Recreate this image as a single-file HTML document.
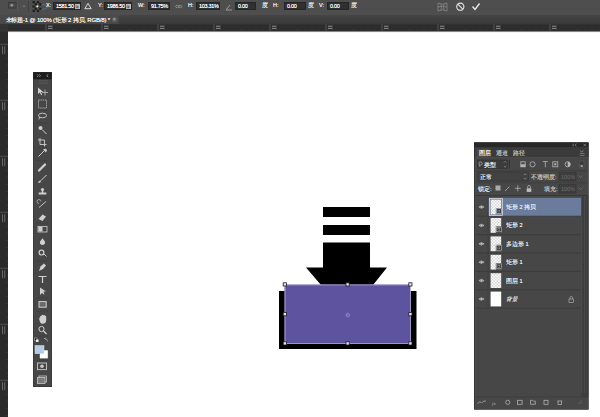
<!DOCTYPE html>
<html><head><meta charset="utf-8">
<style>
*{margin:0;padding:0;box-sizing:border-box}
html,body{width:600px;height:417px;overflow:hidden;background:#fff;font-family:"Liberation Sans",sans-serif}
.a{position:absolute}
#opt{left:0;top:0;width:600px;height:14.5px;background:#4e4e4e}
#tabs{left:0;top:14.5px;width:600px;height:9.5px;background:linear-gradient(#454545,#393939)}
#tab{left:0;top:14.5px;width:119px;height:9.5px;background:#4a4a4a;color:#f2f2f2;font-size:6px;line-height:10px;padding-left:5.5px;letter-spacing:-0.17px;text-shadow:0 0 0.4px #fff;white-space:nowrap}
#tabx{left:111.5px;top:16.5px;width:5.5px;height:5.5px;border-radius:50%;background:#5e5e5e;color:#bbb;font-size:5px;line-height:5.5px;text-align:center}
#rulerh{left:0;top:24px;width:600px;height:8px;background:#2a2a2a}
#rulerv{left:0;top:24px;width:8px;height:393px;background:#2a2a2a}
#corner{left:0;top:24px;width:8px;height:8px;background:#3a3a3a}
.box{background:#303030;border:0.5px solid #262626;color:#ffffff;font-size:5.5px;line-height:7px;height:7.5px;top:2px;padding-left:2px;letter-spacing:-0.3px;text-shadow:0 0 0.3px #fff;white-space:nowrap;overflow:hidden}
.u{position:absolute;right:0.5px;top:1px;width:4.5px;height:5px;background:#bdbdbd;color:#333;font-size:4px;line-height:5px;overflow:hidden}
.lbl{color:#e6e6e6;font-size:5.5px;line-height:7.5px;top:2px;white-space:nowrap;text-shadow:0 0 0.3px #fff}
#tools{left:33px;top:72px;width:19px;height:315px;background:#474747;border:1px solid #2a2a2a}
#toolshead{left:33px;top:72px;width:19px;height:7px;background:#1e1e1e}
#layers{left:474px;top:142px;width:115px;height:268px;background:#464646;border:1px solid #262626}
#lhead{left:474px;top:142px;width:115px;height:5px;background:#262626}
.lt{color:#e4e4e4;font-size:5.5px;line-height:8px;white-space:nowrap;text-shadow:0 0 0.3px #fff}
</style></head><body>
<div id="opt" class="a"></div>

<!-- options bar -->
<svg class="a" style="left:0;top:0" width="600" height="14">
 <rect x="8.5" y="2.5" width="7.5" height="5.5" fill="none" stroke="#393939" stroke-width="0.9"/>
 <circle cx="11.8" cy="5.2" r="1.3" fill="#9a9a9a"/>
 <line x1="17.7" y1="1" x2="17.7" y2="12" stroke="#5c5c5c" stroke-width="0.8"/>
 <circle cx="24" cy="6.2" r="1" fill="#777"/>
 <line x1="28.5" y1="1" x2="28.5" y2="12" stroke="#3e3e3e" stroke-width="0.8"/>
 <g fill="#1c1c1c"><rect x="32.5" y="1.0" width="2.2" height="2.2"/><rect x="36.9" y="1.0" width="2.2" height="2.2"/><rect x="34.7" y="3.2" width="2.2" height="2.2"/><rect x="39.1" y="3.2" width="2.2" height="2.2"/><rect x="32.5" y="5.4" width="2.2" height="2.2"/><rect x="36.9" y="5.4" width="2.2" height="2.2"/><rect x="34.7" y="7.6" width="2.2" height="2.2"/><rect x="39.1" y="7.6" width="2.2" height="2.2"/><rect x="32.5" y="9.8" width="2.2" height="2.2"/><rect x="36.9" y="9.8" width="2.2" height="2.2"/></g>
 <circle cx="37.4" cy="6.4" r="1.1" fill="#f0f0f0"/>
 <path d="M42 4 Q47 5 48 7 Q46 9 42 9.5" stroke="#777" stroke-width="0.7" fill="none"/>
 <path d="M84.8 8.7 L88 3.4 L91.2 8.7 Z" stroke="#e6e6e6" stroke-width="0.9" fill="none"/>
 <ellipse cx="177.3" cy="6.5" rx="1.6" ry="1.2" fill="none" stroke="#aaa" stroke-width="0.6"/><ellipse cx="180.3" cy="6.5" rx="1.6" ry="1.2" fill="none" stroke="#aaa" stroke-width="0.6"/>
 <path d="M226 10 L232 10 M226 10 L230 5" stroke="#bbb" stroke-width="0.7" fill="none"/>
 <g fill="none" stroke="#8e8e8e" stroke-width="0.7">
  <path d="M438 3 q4.5 2.5 9 0 M438 7 q4.5 -1.5 9 0 M438 11 q4.5 -2.5 9 0 M438 3 v8 M447 3 v8 M441 4.2 q0.8 3 0 6 M444 4.2 q-0.8 3 0 6"/>
 </g>
 <circle cx="460.3" cy="6.7" r="3.6" stroke="#e6e6e6" stroke-width="1.1" fill="none"/>
 <path d="M457.8 4.2 L462.8 9.2" stroke="#e6e6e6" stroke-width="1.1"/>
 <path d="M472.5 6.5 L475 9.5 L479.5 3.5" stroke="#eeeeee" stroke-width="1.3" fill="none"/>
</svg>
<div class="a lbl" style="left:46px">X:</div>
<div class="a box" style="left:53px;width:28px">1581.50 <span class="u">像</span></div>
<div class="a lbl" style="left:98px">Y:</div>
<div class="a box" style="left:104px;width:28px">1986.50 <span class="u">像</span></div>
<div class="a lbl" style="left:138px">W:</div>
<div class="a box" style="left:148px;width:22px">91.75%</div>
<div class="a lbl" style="left:188px">H:</div>
<div class="a box" style="left:196px;width:24px">103.31%</div>
<div class="a box" style="left:235px;width:21px">0.00</div>
<div class="a lbl" style="left:262px">度</div>
<div class="a lbl" style="left:273px">H:</div>
<div class="a box" style="left:284px;width:22px">0.00</div>
<div class="a lbl" style="left:308px">度</div>
<div class="a lbl" style="left:319px">V:</div>
<div class="a box" style="left:327px;width:22px">0.00</div>
<div class="a lbl" style="left:351px">度</div>
<div id="tabs" class="a"></div>
<div id="tab" class="a">未标题-1 @ 100% (矩形 2 拷贝, RGB/8) *</div>
<div id="tabx" class="a">×</div>
<svg class="a" style="left:0;top:0" width="600" height="417">
 <rect x="0" y="24" width="600" height="7.8" fill="#2d2d2d"/>
 <path d="M0 24.3 H600" stroke="#383838" stroke-width="0.6"/>
 <rect x="0" y="24" width="8" height="393" fill="#2b2b2b"/>
 <path d="M46.0 24 V31.5" stroke="#5a5a5a" stroke-width="0.8"/>
 <path d="M48.0 26.2 h4.5 M48.0 28.4 h4.5" stroke="#9c9c9c" stroke-width="0.9"/>
 <path d="M53.0 30.0 V31.5" stroke="#4a4a4a" stroke-width="0.5"/>
 <path d="M60.0 30.0 V31.5" stroke="#4a4a4a" stroke-width="0.5"/>
 <path d="M67.0 30.0 V31.5" stroke="#4a4a4a" stroke-width="0.5"/>
 <path d="M74.0 29.0 V31.5" stroke="#4a4a4a" stroke-width="0.5"/>
 <path d="M81.0 30.0 V31.5" stroke="#4a4a4a" stroke-width="0.5"/>
 <path d="M88.0 30.0 V31.5" stroke="#4a4a4a" stroke-width="0.5"/>
 <path d="M95.0 30.0 V31.5" stroke="#4a4a4a" stroke-width="0.5"/>
 <path d="M102.0 24 V31.5" stroke="#5a5a5a" stroke-width="0.8"/>
 <path d="M104.0 26.2 h4.5 M104.0 28.4 h4.5" stroke="#9c9c9c" stroke-width="0.9"/>
 <path d="M109.0 30.0 V31.5" stroke="#4a4a4a" stroke-width="0.5"/>
 <path d="M116.0 30.0 V31.5" stroke="#4a4a4a" stroke-width="0.5"/>
 <path d="M123.0 30.0 V31.5" stroke="#4a4a4a" stroke-width="0.5"/>
 <path d="M130.0 29.0 V31.5" stroke="#4a4a4a" stroke-width="0.5"/>
 <path d="M137.0 30.0 V31.5" stroke="#4a4a4a" stroke-width="0.5"/>
 <path d="M144.0 30.0 V31.5" stroke="#4a4a4a" stroke-width="0.5"/>
 <path d="M151.0 30.0 V31.5" stroke="#4a4a4a" stroke-width="0.5"/>
 <path d="M158.0 24 V31.5" stroke="#5a5a5a" stroke-width="0.8"/>
 <path d="M160.0 26.2 h4.5 M160.0 28.4 h4.5" stroke="#9c9c9c" stroke-width="0.9"/>
 <path d="M165.0 30.0 V31.5" stroke="#4a4a4a" stroke-width="0.5"/>
 <path d="M172.0 30.0 V31.5" stroke="#4a4a4a" stroke-width="0.5"/>
 <path d="M179.0 30.0 V31.5" stroke="#4a4a4a" stroke-width="0.5"/>
 <path d="M186.0 29.0 V31.5" stroke="#4a4a4a" stroke-width="0.5"/>
 <path d="M193.0 30.0 V31.5" stroke="#4a4a4a" stroke-width="0.5"/>
 <path d="M200.0 30.0 V31.5" stroke="#4a4a4a" stroke-width="0.5"/>
 <path d="M207.0 30.0 V31.5" stroke="#4a4a4a" stroke-width="0.5"/>
 <path d="M214.0 24 V31.5" stroke="#5a5a5a" stroke-width="0.8"/>
 <path d="M216.0 26.2 h4.5 M216.0 28.4 h4.5" stroke="#9c9c9c" stroke-width="0.9"/>
 <path d="M221.0 30.0 V31.5" stroke="#4a4a4a" stroke-width="0.5"/>
 <path d="M228.0 30.0 V31.5" stroke="#4a4a4a" stroke-width="0.5"/>
 <path d="M235.0 30.0 V31.5" stroke="#4a4a4a" stroke-width="0.5"/>
 <path d="M242.0 29.0 V31.5" stroke="#4a4a4a" stroke-width="0.5"/>
 <path d="M249.0 30.0 V31.5" stroke="#4a4a4a" stroke-width="0.5"/>
 <path d="M256.0 30.0 V31.5" stroke="#4a4a4a" stroke-width="0.5"/>
 <path d="M263.0 30.0 V31.5" stroke="#4a4a4a" stroke-width="0.5"/>
 <path d="M270.0 24 V31.5" stroke="#5a5a5a" stroke-width="0.8"/>
 <path d="M272.0 26.2 h4.5 M272.0 28.4 h4.5" stroke="#9c9c9c" stroke-width="0.9"/>
 <path d="M277.0 30.0 V31.5" stroke="#4a4a4a" stroke-width="0.5"/>
 <path d="M284.0 30.0 V31.5" stroke="#4a4a4a" stroke-width="0.5"/>
 <path d="M291.0 30.0 V31.5" stroke="#4a4a4a" stroke-width="0.5"/>
 <path d="M298.0 29.0 V31.5" stroke="#4a4a4a" stroke-width="0.5"/>
 <path d="M305.0 30.0 V31.5" stroke="#4a4a4a" stroke-width="0.5"/>
 <path d="M312.0 30.0 V31.5" stroke="#4a4a4a" stroke-width="0.5"/>
 <path d="M319.0 30.0 V31.5" stroke="#4a4a4a" stroke-width="0.5"/>
 <path d="M326.0 24 V31.5" stroke="#5a5a5a" stroke-width="0.8"/>
 <path d="M328.0 26.2 h4.5 M328.0 28.4 h4.5" stroke="#9c9c9c" stroke-width="0.9"/>
 <path d="M333.0 30.0 V31.5" stroke="#4a4a4a" stroke-width="0.5"/>
 <path d="M340.0 30.0 V31.5" stroke="#4a4a4a" stroke-width="0.5"/>
 <path d="M347.0 30.0 V31.5" stroke="#4a4a4a" stroke-width="0.5"/>
 <path d="M354.0 29.0 V31.5" stroke="#4a4a4a" stroke-width="0.5"/>
 <path d="M361.0 30.0 V31.5" stroke="#4a4a4a" stroke-width="0.5"/>
 <path d="M368.0 30.0 V31.5" stroke="#4a4a4a" stroke-width="0.5"/>
 <path d="M375.0 30.0 V31.5" stroke="#4a4a4a" stroke-width="0.5"/>
 <path d="M382.0 24 V31.5" stroke="#5a5a5a" stroke-width="0.8"/>
 <path d="M384.0 26.2 h4.5 M384.0 28.4 h4.5" stroke="#9c9c9c" stroke-width="0.9"/>
 <path d="M389.0 30.0 V31.5" stroke="#4a4a4a" stroke-width="0.5"/>
 <path d="M396.0 30.0 V31.5" stroke="#4a4a4a" stroke-width="0.5"/>
 <path d="M403.0 30.0 V31.5" stroke="#4a4a4a" stroke-width="0.5"/>
 <path d="M410.0 29.0 V31.5" stroke="#4a4a4a" stroke-width="0.5"/>
 <path d="M417.0 30.0 V31.5" stroke="#4a4a4a" stroke-width="0.5"/>
 <path d="M424.0 30.0 V31.5" stroke="#4a4a4a" stroke-width="0.5"/>
 <path d="M431.0 30.0 V31.5" stroke="#4a4a4a" stroke-width="0.5"/>
 <path d="M438.0 24 V31.5" stroke="#5a5a5a" stroke-width="0.8"/>
 <path d="M440.0 26.2 h4.5 M440.0 28.4 h4.5" stroke="#9c9c9c" stroke-width="0.9"/>
 <path d="M445.0 30.0 V31.5" stroke="#4a4a4a" stroke-width="0.5"/>
 <path d="M452.0 30.0 V31.5" stroke="#4a4a4a" stroke-width="0.5"/>
 <path d="M459.0 30.0 V31.5" stroke="#4a4a4a" stroke-width="0.5"/>
 <path d="M466.0 29.0 V31.5" stroke="#4a4a4a" stroke-width="0.5"/>
 <path d="M473.0 30.0 V31.5" stroke="#4a4a4a" stroke-width="0.5"/>
 <path d="M480.0 30.0 V31.5" stroke="#4a4a4a" stroke-width="0.5"/>
 <path d="M487.0 30.0 V31.5" stroke="#4a4a4a" stroke-width="0.5"/>
 <path d="M494.0 24 V31.5" stroke="#5a5a5a" stroke-width="0.8"/>
 <path d="M496.0 26.2 h4.5 M496.0 28.4 h4.5" stroke="#9c9c9c" stroke-width="0.9"/>
 <path d="M501.0 30.0 V31.5" stroke="#4a4a4a" stroke-width="0.5"/>
 <path d="M508.0 30.0 V31.5" stroke="#4a4a4a" stroke-width="0.5"/>
 <path d="M515.0 30.0 V31.5" stroke="#4a4a4a" stroke-width="0.5"/>
 <path d="M522.0 29.0 V31.5" stroke="#4a4a4a" stroke-width="0.5"/>
 <path d="M529.0 30.0 V31.5" stroke="#4a4a4a" stroke-width="0.5"/>
 <path d="M536.0 30.0 V31.5" stroke="#4a4a4a" stroke-width="0.5"/>
 <path d="M543.0 30.0 V31.5" stroke="#4a4a4a" stroke-width="0.5"/>
 <path d="M550.0 24 V31.5" stroke="#5a5a5a" stroke-width="0.8"/>
 <path d="M552.0 26.2 h4.5 M552.0 28.4 h4.5" stroke="#9c9c9c" stroke-width="0.9"/>
 <path d="M557.0 30.0 V31.5" stroke="#4a4a4a" stroke-width="0.5"/>
 <path d="M564.0 30.0 V31.5" stroke="#4a4a4a" stroke-width="0.5"/>
 <path d="M571.0 30.0 V31.5" stroke="#4a4a4a" stroke-width="0.5"/>
 <path d="M578.0 29.0 V31.5" stroke="#4a4a4a" stroke-width="0.5"/>
 <path d="M585.0 30.0 V31.5" stroke="#4a4a4a" stroke-width="0.5"/>
 <path d="M592.0 30.0 V31.5" stroke="#4a4a4a" stroke-width="0.5"/>
 <path d="M599.0 30.0 V31.5" stroke="#4a4a4a" stroke-width="0.5"/>
 <path d="M0 44.3 H8" stroke="#5a5a5a" stroke-width="0.8"/>
 <path d="M2.5 46.3 v8 M4.7 46.3 v8" stroke="#8a8a8a" stroke-width="0.8" opacity="0.8"/>
 <path d="M6.5 51.3 H8" stroke="#4a4a4a" stroke-width="0.5"/>
 <path d="M6.5 58.3 H8" stroke="#4a4a4a" stroke-width="0.5"/>
 <path d="M6.5 65.3 H8" stroke="#4a4a4a" stroke-width="0.5"/>
 <path d="M5.5 72.3 H8" stroke="#4a4a4a" stroke-width="0.5"/>
 <path d="M6.5 79.3 H8" stroke="#4a4a4a" stroke-width="0.5"/>
 <path d="M6.5 86.3 H8" stroke="#4a4a4a" stroke-width="0.5"/>
 <path d="M6.5 93.3 H8" stroke="#4a4a4a" stroke-width="0.5"/>
 <path d="M0 100.3 H8" stroke="#5a5a5a" stroke-width="0.8"/>
 <path d="M2.5 102.3 v8 M4.7 102.3 v8" stroke="#8a8a8a" stroke-width="0.8" opacity="0.8"/>
 <path d="M6.5 107.3 H8" stroke="#4a4a4a" stroke-width="0.5"/>
 <path d="M6.5 114.3 H8" stroke="#4a4a4a" stroke-width="0.5"/>
 <path d="M6.5 121.3 H8" stroke="#4a4a4a" stroke-width="0.5"/>
 <path d="M5.5 128.3 H8" stroke="#4a4a4a" stroke-width="0.5"/>
 <path d="M6.5 135.3 H8" stroke="#4a4a4a" stroke-width="0.5"/>
 <path d="M6.5 142.3 H8" stroke="#4a4a4a" stroke-width="0.5"/>
 <path d="M6.5 149.3 H8" stroke="#4a4a4a" stroke-width="0.5"/>
 <path d="M0 156.3 H8" stroke="#5a5a5a" stroke-width="0.8"/>
 <path d="M2.5 158.3 v8 M4.7 158.3 v8" stroke="#8a8a8a" stroke-width="0.8" opacity="0.8"/>
 <path d="M6.5 163.3 H8" stroke="#4a4a4a" stroke-width="0.5"/>
 <path d="M6.5 170.3 H8" stroke="#4a4a4a" stroke-width="0.5"/>
 <path d="M6.5 177.3 H8" stroke="#4a4a4a" stroke-width="0.5"/>
 <path d="M5.5 184.3 H8" stroke="#4a4a4a" stroke-width="0.5"/>
 <path d="M6.5 191.3 H8" stroke="#4a4a4a" stroke-width="0.5"/>
 <path d="M6.5 198.3 H8" stroke="#4a4a4a" stroke-width="0.5"/>
 <path d="M6.5 205.3 H8" stroke="#4a4a4a" stroke-width="0.5"/>
 <path d="M0 212.3 H8" stroke="#5a5a5a" stroke-width="0.8"/>
 <path d="M2.5 214.3 v8 M4.7 214.3 v8" stroke="#8a8a8a" stroke-width="0.8" opacity="0.8"/>
 <path d="M6.5 219.3 H8" stroke="#4a4a4a" stroke-width="0.5"/>
 <path d="M6.5 226.3 H8" stroke="#4a4a4a" stroke-width="0.5"/>
 <path d="M6.5 233.3 H8" stroke="#4a4a4a" stroke-width="0.5"/>
 <path d="M5.5 240.3 H8" stroke="#4a4a4a" stroke-width="0.5"/>
 <path d="M6.5 247.3 H8" stroke="#4a4a4a" stroke-width="0.5"/>
 <path d="M6.5 254.3 H8" stroke="#4a4a4a" stroke-width="0.5"/>
 <path d="M6.5 261.3 H8" stroke="#4a4a4a" stroke-width="0.5"/>
 <path d="M0 268.3 H8" stroke="#5a5a5a" stroke-width="0.8"/>
 <path d="M2.5 270.3 v8 M4.7 270.3 v8" stroke="#8a8a8a" stroke-width="0.8" opacity="0.8"/>
 <path d="M6.5 275.3 H8" stroke="#4a4a4a" stroke-width="0.5"/>
 <path d="M6.5 282.3 H8" stroke="#4a4a4a" stroke-width="0.5"/>
 <path d="M6.5 289.3 H8" stroke="#4a4a4a" stroke-width="0.5"/>
 <path d="M5.5 296.3 H8" stroke="#4a4a4a" stroke-width="0.5"/>
 <path d="M6.5 303.3 H8" stroke="#4a4a4a" stroke-width="0.5"/>
 <path d="M6.5 310.3 H8" stroke="#4a4a4a" stroke-width="0.5"/>
 <path d="M6.5 317.3 H8" stroke="#4a4a4a" stroke-width="0.5"/>
 <path d="M0 324.3 H8" stroke="#5a5a5a" stroke-width="0.8"/>
 <path d="M2.5 326.3 v8 M4.7 326.3 v8" stroke="#8a8a8a" stroke-width="0.8" opacity="0.8"/>
 <path d="M6.5 331.3 H8" stroke="#4a4a4a" stroke-width="0.5"/>
 <path d="M6.5 338.3 H8" stroke="#4a4a4a" stroke-width="0.5"/>
 <path d="M6.5 345.3 H8" stroke="#4a4a4a" stroke-width="0.5"/>
 <path d="M5.5 352.3 H8" stroke="#4a4a4a" stroke-width="0.5"/>
 <path d="M6.5 359.3 H8" stroke="#4a4a4a" stroke-width="0.5"/>
 <path d="M6.5 366.3 H8" stroke="#4a4a4a" stroke-width="0.5"/>
 <path d="M6.5 373.3 H8" stroke="#4a4a4a" stroke-width="0.5"/>
 <path d="M0 380.3 H8" stroke="#5a5a5a" stroke-width="0.8"/>
 <path d="M2.5 382.3 v8 M4.7 382.3 v8" stroke="#8a8a8a" stroke-width="0.8" opacity="0.8"/>
 <path d="M6.5 387.3 H8" stroke="#4a4a4a" stroke-width="0.5"/>
 <path d="M6.5 394.3 H8" stroke="#4a4a4a" stroke-width="0.5"/>
 <path d="M6.5 401.3 H8" stroke="#4a4a4a" stroke-width="0.5"/>
 <path d="M5.5 408.3 H8" stroke="#4a4a4a" stroke-width="0.5"/>
 <path d="M6.5 415.3 H8" stroke="#4a4a4a" stroke-width="0.5"/>
 <path d="M6.5 422.3 H8" stroke="#4a4a4a" stroke-width="0.5"/>
 <path d="M6.5 429.3 H8" stroke="#4a4a4a" stroke-width="0.5"/>
 <rect x="0" y="24" width="8" height="7.8" fill="#343434"/>
 <path d="M8 31.9 H600" stroke="#d8d8d8" stroke-width="0.6"/>
</svg>

<!-- canvas shapes -->
<div class="a" style="left:323px;top:207px;width:47px;height:10px;background:#000"></div>
<div class="a" style="left:323px;top:225px;width:47px;height:10px;background:#000"></div>
<svg class="a" style="left:0;top:0" width="600" height="417">
<polygon points="323,242.5 370,242.5 370,267.5 387,267.5 373,285 321,285 306,267.5 323,267.5" fill="#000"/>
<rect x="279" y="291" width="137.5" height="58" fill="#000"/>
<rect x="284.5" y="284.5" width="126" height="59" fill="#5e539e"/>
<rect x="285" y="284.9" width="125.6" height="58.6" fill="none" stroke="#b9b3dc" stroke-width="0.8"/>
<circle cx="347.8" cy="315" r="1.8" fill="none" stroke="#9d95cf" stroke-width="0.6"/>
<path d="M345.3 315 h5 M347.8 312.5 v5" stroke="#9d95cf" stroke-width="0.4"/>
<rect x="283.2" y="282.8" width="3.2" height="3.2" fill="#e8e8e8" stroke="#1a1a1a" stroke-width="0.8"/>
<rect x="346.0" y="282.8" width="3.2" height="3.2" fill="#e8e8e8" stroke="#1a1a1a" stroke-width="0.8"/>
<rect x="408.8" y="282.8" width="3.2" height="3.2" fill="#e8e8e8" stroke="#1a1a1a" stroke-width="0.8"/>
<rect x="283.2" y="312.6" width="3.2" height="3.2" fill="#e8e8e8" stroke="#1a1a1a" stroke-width="0.8"/>
<rect x="408.8" y="312.6" width="3.2" height="3.2" fill="#e8e8e8" stroke="#1a1a1a" stroke-width="0.8"/>
<rect x="283.2" y="341.8" width="3.2" height="3.2" fill="#e8e8e8" stroke="#1a1a1a" stroke-width="0.8"/>
<rect x="346.0" y="341.8" width="3.2" height="3.2" fill="#e8e8e8" stroke="#1a1a1a" stroke-width="0.8"/>
<rect x="408.8" y="341.8" width="3.2" height="3.2" fill="#e8e8e8" stroke="#1a1a1a" stroke-width="0.8"/>
</svg>


<svg class="a" style="left:33px;top:72px" width="19" height="315" viewBox="33 72 19 315">
 <rect x="33" y="72" width="19" height="315" fill="#474747"/>
 <rect x="33" y="72" width="19" height="7.3" fill="#1d1d1d"/>
 <path d="M37 74.3 l1.4 1.4 l-1.4 1.4 M39.2 74.3 l1.4 1.4 l-1.4 1.4" stroke="#9a9a9a" stroke-width="0.8" fill="none"/>
 <path d="M48.3 74.3 l-1.6 1.4 l1.6 1.4" stroke="#9a9a9a" stroke-width="0.9" fill="none"/>
 <g stroke="#5c5c5c" stroke-width="0.5"><path d="M39 80.5h9M39 82h9M39 83.5h9"/></g>
 <g fill="#cfcfcf" stroke="#cfcfcf" stroke-width="0.9">
  <!-- move -->
  <path d="M38 87.5 l0 6.5 l1.8 -1.6 l1.4 2.8 l1 -0.5 l-1.3 -2.7 l2.4 0 z" stroke="none"/>
  <path d="M45 89.5 v6 M42 92.5 h6" stroke-width="0.7" fill="none"/>
  <!-- marquee -->
  <rect x="38.5" y="100" width="8" height="8" fill="none" stroke-dasharray="1.2 0.9" stroke-width="0.8"/>
  <!-- lasso -->
  <ellipse cx="42.5" cy="115.5" rx="4" ry="2.3" fill="none" stroke-width="0.9"/>
  <path d="M39.5 117 l-0.5 2.5" fill="none" stroke-width="0.8"/>
  <!-- quick selection -->
  <circle cx="40.5" cy="128" r="2" stroke="none"/>
  <path d="M42 129.5 l4.5 4.5" fill="none" stroke-width="1"/>
  <!-- crop -->
  <path d="M40 138 v6.5 h6.5 M38 140 h6.5 v6.5" fill="none" stroke-width="0.9"/>
  <!-- eyedropper -->
  <path d="M38.5 156.5 l5.5 -5.5" fill="none" stroke-width="1"/>
  <path d="M43 149.5 l2.5 -1 l1.5 1.5 l-1 2.5 z" stroke="none"/>
  <!-- healing -->
  <path d="M39 170.5 l6 -6" fill="none" stroke-width="2.3" stroke-linecap="round"/>
  <!-- brush -->
  <path d="M41 180.5 l5.5 -5.5" fill="none" stroke-width="1"/>
  <path d="M38 183 q0.5 -3 3 -2.5 q0 2.5 -3 2.5z" stroke="none"/>
  <!-- stamp -->
  <circle cx="42.5" cy="189.5" r="1.6" stroke="none"/>
  <path d="M41.7 190.5 h1.6 v2 h3 v2 h-7.6 v-2 h3z" stroke="none"/>
  <!-- history brush -->
  <path d="M39 207.5 l7 -6" fill="none" stroke-width="0.9"/>
  <path d="M39 203.5 a2 2 0 1 1 2 -2" fill="none" stroke-width="0.6"/>
  <!-- eraser -->
  <path d="M38.5 219 l4 -4.5 l3.5 2 l-3.5 4.5 z" stroke="none"/>
  <!-- gradient -->
  <rect x="38" y="226.5" width="9" height="5.5" fill="none" stroke-width="0.8"/>
  <rect x="38.5" y="227" width="4" height="4.5" stroke="none"/>
  <!-- blur drop -->
  <path d="M42.5 238.2 q-2.6 3.2 -2.6 4.1 a2.6 2.6 0 0 0 5.2 0 q0 -0.9 -2.6 -4.1z" stroke="none"/>
  <!-- dodge -->
  <circle cx="41.5" cy="252.6" r="2.4" fill="none" stroke-width="1.2"/>
  <path d="M44 254 l2.5 2.5" fill="none" stroke-width="1"/>
  <!-- pen -->
  <path d="M39 271 l1.5 -4.5 l3.5 -3 l2 2 l-3 3.5 z" stroke="none"/>
  <!-- type -->
  <path d="M38.5 276.5 h8 M42.5 276.5 v6.5" fill="none" stroke-width="1.2"/>
  <!-- path selection -->
  <path d="M40 287.5 v7.5 l2 -2 l2.5 2 l-1 -3.5 l2.5 0 z" stroke="none"/>
  <!-- rect shape -->
  <rect x="39" y="301.6" width="7.2" height="5.6" fill="#6a6a6a" stroke-width="1"/>
  <!-- hand -->
  <path d="M39.5 320.5 q-1 -2 0.5 -3.5 l0.5 -1 q1 -1 1.2 0 l0.3 -1 q1.2 -0.8 1.5 0.3 q1.2 -0.6 1.5 0.5 q1.2 -0.2 1.2 1 v3.5 q0 3 -3 3.5 h-1.5 q-1.5 -0.5 -2.2 -3.3z" stroke="none"/>
  <!-- zoom -->
  <circle cx="41.5" cy="329" r="2.6" fill="none" stroke-width="1"/>
  <path d="M43.5 331 l3 3" fill="none" stroke-width="1.3"/>
 </g>
 <g stroke="#3c3c3c" stroke-width="0.6">
  <path d="M36 110.5h13M36 123h13M36 148h13M36 160.5h13M36 198h13M36 223h13M36 261h13M36 298h13M36 311h13M36 336h13M36 360.5h13"/>
 </g>
 <!-- default / swap -->
 <rect x="34.5" y="338" width="2.5" height="2.5" fill="#111" stroke="#ccc" stroke-width="0.5"/>
 <rect x="36" y="339.5" width="2.5" height="2.5" fill="#eee"/>
 <path d="M44.5 338.5 q3 0 3 3 M44.5 338.5 l1 -0.8 M44.5 338.5 l1 0.8" stroke="#ccc" stroke-width="0.6" fill="none"/>
 <!-- color swatches -->
 <rect x="39.5" y="350" width="8.6" height="8.8" fill="#ffffff" stroke="#333" stroke-width="0.5"/>
 <rect x="35" y="345.5" width="9" height="8.2" fill="#b3cbe3" stroke="#ddd" stroke-width="0.5"/>
 <!-- quick mask -->
 <rect x="37.5" y="363" width="9" height="6.6" fill="none" stroke="#c8c8c8" stroke-width="0.9"/>
 <circle cx="42" cy="366.3" r="1.8" fill="#c8c8c8"/>
 <!-- screen mode -->
 <rect x="39" y="376" width="7.5" height="6" fill="none" stroke="#c8c8c8" stroke-width="0.8"/>
 <rect x="37.5" y="377.5" width="7.5" height="6" fill="#7a7a7a" stroke="#c8c8c8" stroke-width="0.8"/>
 <rect x="33.25" y="72.25" width="18.5" height="314.5" fill="none" stroke="#2e2e2e" stroke-width="0.5"/>
</svg>



<svg class="a" style="left:0;top:0" width="600" height="417">
 <defs>
  <pattern id="chk" x="0" y="0" width="3" height="3" patternUnits="userSpaceOnUse">
   <rect width="3" height="3" fill="#ffffff"/><rect width="1.5" height="1.5" fill="#d6d6d6"/><rect x="1.5" y="1.5" width="1.5" height="1.5" fill="#d6d6d6"/>
  </pattern>
 </defs>
 <rect x="474" y="142.5" width="114.5" height="267" fill="#474747"/>
 <rect x="474" y="142.5" width="114.5" height="5" fill="#282828"/>
 <rect x="474" y="147.5" width="114.5" height="10" fill="#3b3b3b"/>
 <rect x="477" y="148.5" width="12" height="9" fill="#4b4b4b"/>
 <path d="M574 143.8 l-1.5 1.3 l1.5 1.3 M576.5 143.8 l-1.5 1.3 l1.5 1.3 M583.5 143.8 l2.5 2.5 M586 143.8 l-2.5 2.5" stroke="#9a9a9a" stroke-width="0.6" fill="none"/>
 <path d="M580 150.5 l1.8 1.6 l1.8 -1.6" stroke="#aaa" stroke-width="0.6" fill="none"/><path d="M580 153.5 h4.5 M580 155.5 h4.5" stroke="#aaaaaa" stroke-width="0.5"/>
 <path d="M474.5 157.7 H588" stroke="#555" stroke-width="0.6"/>
 <!-- filter row -->
 <rect x="477.5" y="160" width="30" height="8.5" fill="#3c3c3c" stroke="#2e2e2e" stroke-width="0.5"/>
 <circle cx="480.5" cy="163.5" r="1.6" fill="none" stroke="#cfcfcf" stroke-width="0.6"/><path d="M479.8 165 l-0.6 1.6" stroke="#cfcfcf" stroke-width="0.6"/>
 <path d="M504 162.5 l1.2 -1.2 l1.2 1.2 M504 166 l1.2 1.2 l1.2 -1.2" stroke="#bbb" stroke-width="0.5" fill="none"/>
 <rect x="509" y="159.5" width="1" height="9.5" fill="#333"/>
 <g fill="none" stroke="#b8b8b8" stroke-width="0.8">
  <rect x="520.8" y="161.8" width="4.4" height="5" />
  <rect x="520.8" y="164.3" width="4.4" height="2.5" fill="#b8b8b8" stroke="none"/>
  <circle cx="532.5" cy="164.3" r="2.6"/>
  <path d="M542.8 161.6 h5 M545.3 161.6 v5.6"/>
  <rect x="552.8" y="161.8" width="5" height="5"/>
  <rect x="554.3" y="163.3" width="2" height="2" fill="#b8b8b8" stroke="none"/>
  <circle cx="567.7" cy="164.3" r="2.6"/>
  <path d="M567.7 161.7 a2.6 2.6 0 0 1 0 5.2z" fill="#b8b8b8" stroke="none"/>
 </g>
 <rect x="579.5" y="161" width="4.5" height="7" rx="1" fill="#3a3a3a" stroke="#666" stroke-width="0.5"/>
 <circle cx="581.7" cy="166" r="1.3" fill="#999"/>
 <path d="M474.5 170.8 H588" stroke="#3a3a3a" stroke-width="0.6"/>
 <!-- blend row -->
 <rect x="477.5" y="172" width="51" height="9" fill="#424242" stroke="#333" stroke-width="0.5"/>
 <path d="M524 175 l1.2 -1.2 l1.2 1.2 M524 178 l1.2 1.2 l1.2 -1.2" stroke="#bbb" stroke-width="0.5" fill="none"/>
 <rect x="559" y="172.5" width="17" height="8.5" fill="#3e3e3e" stroke="#333" stroke-width="0.5"/>
 <path d="M578.5 175.5 l2 2 l2 -2" stroke="#777" stroke-width="0.6" fill="none"/>
 <path d="M474.5 182.8 H588" stroke="#3a3a3a" stroke-width="0.6"/>
 <!-- lock row -->
 <g fill="none" stroke="#bdbdbd" stroke-width="0.7">
  <rect x="495.5" y="185.5" width="5" height="5" fill="url(#chk)" stroke="none" opacity="0.6"/>
  <path d="M505 191 l4.5 -4.5"/>
  <path d="M517.8 185.3 v6 M514.8 188.3 h6"/>
  <rect x="526.7" y="188.3" width="4.6" height="3.6" fill="#bdbdbd" stroke="none"/>
  <path d="M527.6 188.3 v-1.4 a1.4 1.4 0 0 1 2.8 0 v1.4"/>
 </g>
 <rect x="559" y="184.5" width="17" height="8.5" fill="#3e3e3e" stroke="#333" stroke-width="0.5"/>
 <path d="M578.5 187.5 l2 2 l2 -2" stroke="#777" stroke-width="0.6" fill="none"/>
 <path d="M474.5 195.5 H588" stroke="#353535" stroke-width="0.8"/>
<!--ROWS-->
<rect x="488.5" y="197.80" width="92.7" height="18.4" fill="#6a7b9b"/>
<path d="M475.5 216.20 H581" stroke="#3a3a3a" stroke-width="0.8"/>
<path d="M478.9 207.00 q2.6 -2.5 5.2 0 q-2.6 2.5 -5.2 0z" fill="none" stroke="#c8c8c8" stroke-width="0.7"/><circle cx="481.5" cy="207.00" r="1" fill="#c8c8c8"/>
<path d="M488 197.80 V216.20" stroke="#3c3c3c" stroke-width="0.6"/>
<rect x="490.6" y="199.60" width="10.6" height="14.8" fill="url(#chk)"/>
<rect x="495.80" y="208.00" width="5.60" height="6.60" fill="#6a7b9b"/>
<rect x="496.60" y="208.80" width="4.6" height="4.6" fill="#2c2c2c" stroke="#d8d8d8" stroke-width="0.5"/>
<rect x="497.90" y="210.10" width="2" height="2" fill="none" stroke="#cfcfcf" stroke-width="0.4"/>
<rect x="489.40000000000003" y="198.40" width="13.0" height="17.2" fill="none" stroke="#e4e4e4" stroke-width="0.7"/>
<path d="M475.5 234.60 H581" stroke="#3a3a3a" stroke-width="0.8"/>
<path d="M478.9 225.40 q2.6 -2.5 5.2 0 q-2.6 2.5 -5.2 0z" fill="none" stroke="#c8c8c8" stroke-width="0.7"/><circle cx="481.5" cy="225.40" r="1" fill="#c8c8c8"/>
<path d="M488 216.20 V234.60" stroke="#3c3c3c" stroke-width="0.6"/>
<rect x="490.6" y="218.00" width="10.6" height="14.8" fill="url(#chk)"/>
<rect x="495.80" y="226.40" width="5.60" height="6.60" fill="#474747"/>
<rect x="496.60" y="227.20" width="4.6" height="4.6" fill="#2c2c2c" stroke="#d8d8d8" stroke-width="0.5"/>
<rect x="497.90" y="228.50" width="2" height="2" fill="none" stroke="#cfcfcf" stroke-width="0.4"/>
<path d="M475.5 253.00 H581" stroke="#3a3a3a" stroke-width="0.8"/>
<path d="M478.9 243.80 q2.6 -2.5 5.2 0 q-2.6 2.5 -5.2 0z" fill="none" stroke="#c8c8c8" stroke-width="0.7"/><circle cx="481.5" cy="243.80" r="1" fill="#c8c8c8"/>
<path d="M488 234.60 V253.00" stroke="#3c3c3c" stroke-width="0.6"/>
<rect x="490.6" y="236.40" width="10.6" height="14.8" fill="url(#chk)"/>
<rect x="495.80" y="244.80" width="5.60" height="6.60" fill="#474747"/>
<rect x="496.60" y="245.60" width="4.6" height="4.6" fill="#2c2c2c" stroke="#d8d8d8" stroke-width="0.5"/>
<rect x="497.90" y="246.90" width="2" height="2" fill="none" stroke="#cfcfcf" stroke-width="0.4"/>
<path d="M475.5 271.40 H581" stroke="#3a3a3a" stroke-width="0.8"/>
<path d="M478.9 262.20 q2.6 -2.5 5.2 0 q-2.6 2.5 -5.2 0z" fill="none" stroke="#c8c8c8" stroke-width="0.7"/><circle cx="481.5" cy="262.20" r="1" fill="#c8c8c8"/>
<path d="M488 253.00 V271.40" stroke="#3c3c3c" stroke-width="0.6"/>
<rect x="490.6" y="254.80" width="10.6" height="14.8" fill="url(#chk)"/>
<rect x="495.80" y="263.20" width="5.60" height="6.60" fill="#474747"/>
<rect x="496.60" y="264.00" width="4.6" height="4.6" fill="#2c2c2c" stroke="#d8d8d8" stroke-width="0.5"/>
<rect x="497.90" y="265.30" width="2" height="2" fill="none" stroke="#cfcfcf" stroke-width="0.4"/>
<path d="M475.5 289.80 H581" stroke="#3a3a3a" stroke-width="0.8"/>
<path d="M478.9 280.60 q2.6 -2.5 5.2 0 q-2.6 2.5 -5.2 0z" fill="none" stroke="#c8c8c8" stroke-width="0.7"/><circle cx="481.5" cy="280.60" r="1" fill="#c8c8c8"/>
<path d="M488 271.40 V289.80" stroke="#3c3c3c" stroke-width="0.6"/>
<rect x="490.6" y="273.20" width="10.6" height="14.8" fill="url(#chk)"/>
<path d="M475.5 308.20 H581" stroke="#3a3a3a" stroke-width="0.8"/>
<path d="M478.9 299.00 q2.6 -2.5 5.2 0 q-2.6 2.5 -5.2 0z" fill="none" stroke="#c8c8c8" stroke-width="0.7"/><circle cx="481.5" cy="299.00" r="1" fill="#c8c8c8"/>
<path d="M488 289.80 V308.20" stroke="#3c3c3c" stroke-width="0.6"/>
<rect x="490.6" y="291.60" width="10.6" height="14.8" fill="#ffffff"/>
<!--/ROWS-->
 <!-- lock on bg -->
 <rect x="569" y="299" width="4.6" height="3.6" fill="none" stroke="#bbb" stroke-width="0.6"/>
 <path d="M570 299 v-1.3 a1.3 1.3 0 0 1 2.6 0 v1.3" fill="none" stroke="#bbb" stroke-width="0.6"/>
 <!-- scrollbar -->
 <rect x="581.2" y="196" width="7" height="201" fill="#3e3e3e"/>
 <path d="M581.6 196 V393 M584.6 196 V393" stroke="#555" stroke-width="0.6"/>
 <!-- footer -->
 <path d="M474.5 397 H588" stroke="#3a3a3a" stroke-width="0.6"/>
 <g fill="none" stroke="#b0b0b0" stroke-width="0.8">
  <path d="M477.5 403.5 q2 -2.5 4 -1 M482 402.5 q2 -2 4 -1.5"/>
  <text x="492" y="404.8" font-size="5" fill="#b0b0b0" stroke="none" font-style="italic" font-family="Liberation Serif">fx</text>
  <circle cx="507.8" cy="402.3" r="2.1"/>
  <rect x="517.5" y="400.3" width="4.6" height="4"/>
  <path d="M530.5 404.3 v-4 h2 l0.8 0.8 h2 v3.2z"/>
  <rect x="544" y="400.3" width="4" height="4"/>
  <path d="M557.3 401 h5 M558 401 v3.5 h3.5 v-3.5"/>
 </g>
 <path d="M578 404 l4 -4 M580 404.5 l2.5 -2.5" stroke="#777" stroke-width="0.5"/>
 <rect x="474.25" y="142.75" width="114" height="266.5" fill="none" stroke="#222" stroke-width="0.5"/>
 <path d="M475.6 148 V408.5" stroke="#575757" stroke-width="0.5"/>
</svg>
<div class="a lt" style="left:478.5px;top:148.5px;color:#e8e8e8">图层</div>
<div class="a lt" style="left:495.5px;top:148.5px;color:#a8a8a8">通道</div>
<div class="a lt" style="left:512.5px;top:148.5px;color:#a8a8a8">路径</div>
<div class="a lt" style="left:483.5px;top:160.5px">类型</div>
<div class="a lt" style="left:480px;top:172.5px">正常</div>
<div class="a lt" style="left:531px;top:172.5px;color:#aaa">不透明度:</div>
<div class="a lt" style="left:561px;top:172.5px;color:#6e6e6e;text-shadow:none">100%</div>
<div class="a lt" style="left:478px;top:184.5px">锁定:</div>
<div class="a lt" style="left:544px;top:184.5px;color:#aaa">填充:</div>
<div class="a lt" style="left:561px;top:184.5px;color:#6e6e6e;text-shadow:none">100%</div>
<!--RTXT-->
<div class="a lt" style="left:506px;top:203.00px;">矩形 2 拷贝</div>
<div class="a lt" style="left:506px;top:221.40px;">矩形 2</div>
<div class="a lt" style="left:506px;top:239.80px;">多边形 1</div>
<div class="a lt" style="left:506px;top:258.20px;">矩形 1</div>
<div class="a lt" style="left:506px;top:276.60px;">图层 1</div>
<div class="a lt" style="left:506px;top:295.00px;font-style:italic;">背景</div>
<!--/RTXT-->
</body></html>
